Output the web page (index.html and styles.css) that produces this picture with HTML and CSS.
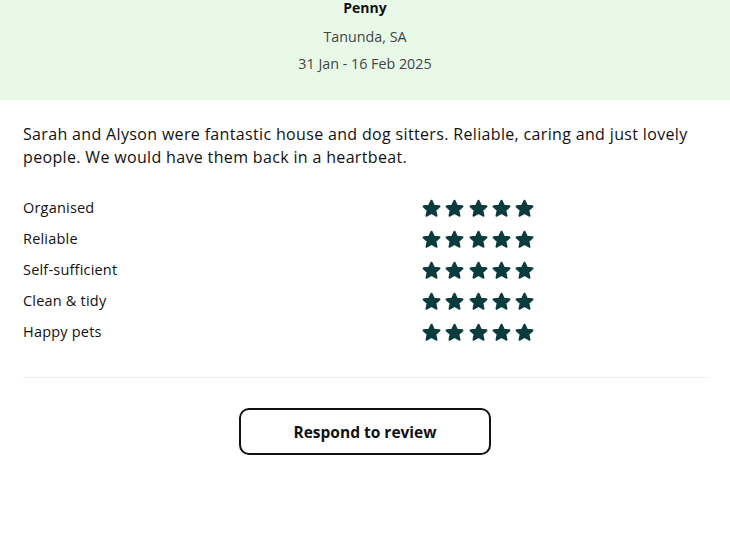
FILE: index.html
```html
<!DOCTYPE html>
<html lang="en">
<head>
<meta charset="utf-8">
<title>Review</title>
<link rel="stylesheet" href="styles.css">
</head>
<body>
<header class="hero">
  <div class="name">Penny</div>
  <div class="place">Tanunda, SA</div>
  <div class="dates">31 Jan - 16 Feb 2025</div>
</header>
<main class="content">
  <p class="review">Sarah and Alyson were fantastic house and dog sitters. Reliable, caring and just lovely people. We would have them back in a heartbeat.</p>
  <svg width="0" height="0" class="defs" aria-hidden="true">
    <defs>
      <symbol id="star" viewBox="0 0 20 20">
        <polygon points="10,2 12.5,7.3 18.2,7.9 13.9,11.8 15.1,17.5 10,14.6 4.9,17.5 6.1,11.8 1.8,7.9 7.5,7.3" fill="#0b3c3d" stroke="#0b3c3d" stroke-width="2.4" stroke-linejoin="round"/>
      </symbol>
    </defs>
  </svg>
  <div class="ratings">
    <div class="label">Organised</div>
    <div class="stars"><svg><use href="#star"/></svg><svg><use href="#star"/></svg><svg><use href="#star"/></svg><svg><use href="#star"/></svg><svg><use href="#star"/></svg></div>
    <div class="label">Reliable</div>
    <div class="stars"><svg><use href="#star"/></svg><svg><use href="#star"/></svg><svg><use href="#star"/></svg><svg><use href="#star"/></svg><svg><use href="#star"/></svg></div>
    <div class="label">Self-sufficient</div>
    <div class="stars"><svg><use href="#star"/></svg><svg><use href="#star"/></svg><svg><use href="#star"/></svg><svg><use href="#star"/></svg><svg><use href="#star"/></svg></div>
    <div class="label">Clean &amp; tidy</div>
    <div class="stars"><svg><use href="#star"/></svg><svg><use href="#star"/></svg><svg><use href="#star"/></svg><svg><use href="#star"/></svg><svg><use href="#star"/></svg></div>
    <div class="label">Happy pets</div>
    <div class="stars"><svg><use href="#star"/></svg><svg><use href="#star"/></svg><svg><use href="#star"/></svg><svg><use href="#star"/></svg><svg><use href="#star"/></svg></div>
  </div>
  <hr class="divider">
  <div class="actions">
    <button class="respond" type="button">Respond to review</button>
  </div>
</main>
</body>
</html>
```

FILE: styles.css
```css
* { box-sizing: border-box; }
html, body { margin: 0; padding: 0; background: #fff; }
body {
  font-family: "Open Sans", "Liberation Sans", sans-serif;
  color: #111;
}
.hero {
  background: #e8f9e8;
  height: 100px;
  display: flex;
  flex-direction: column;
  align-items: center;
}
.name {
  font-weight: 700;
  font-size: 14px;
  line-height: 20px;
  margin-top: -2px;
  color: #111;
}
.place, .dates {
  font-size: 14.3px;
  color: #444;
  line-height: 20px;
}
.place { margin-top: 9px; }
.dates { margin-top: 7px; }
.content {
  padding: 0 23px;
}
.review {
  margin: 23px 0 0;
  font-size: 16px;
  letter-spacing: 0.34px;
  line-height: 23px;
  color: #111;
}
.defs { position: absolute; }
.ratings {
  margin-top: 29px;
  display: grid;
  grid-template-columns: 399px auto;
  row-gap: 11px;
  align-items: center;
}
.label {
  font-size: 14.5px;
  letter-spacing: 0.2px;
  line-height: 20px;
  color: #111;
}
.stars {
  display: flex;
  gap: 4.3px;
}
.stars svg {
  width: 19px;
  height: 19px;
  display: block;
}
.divider {
  border: 0;
  border-top: 1px solid #ececec;
  margin: 35px 0 0;
}
.actions {
  display: flex;
  justify-content: center;
  margin-top: 30px;
}
.respond {
  width: 252px;
  height: 47px;
  border: 2px solid #111;
  border-radius: 10px;
  background: #fff;
  font-family: inherit;
  font-weight: 700;
  font-size: 15.5px;
  color: #111;
}
```
